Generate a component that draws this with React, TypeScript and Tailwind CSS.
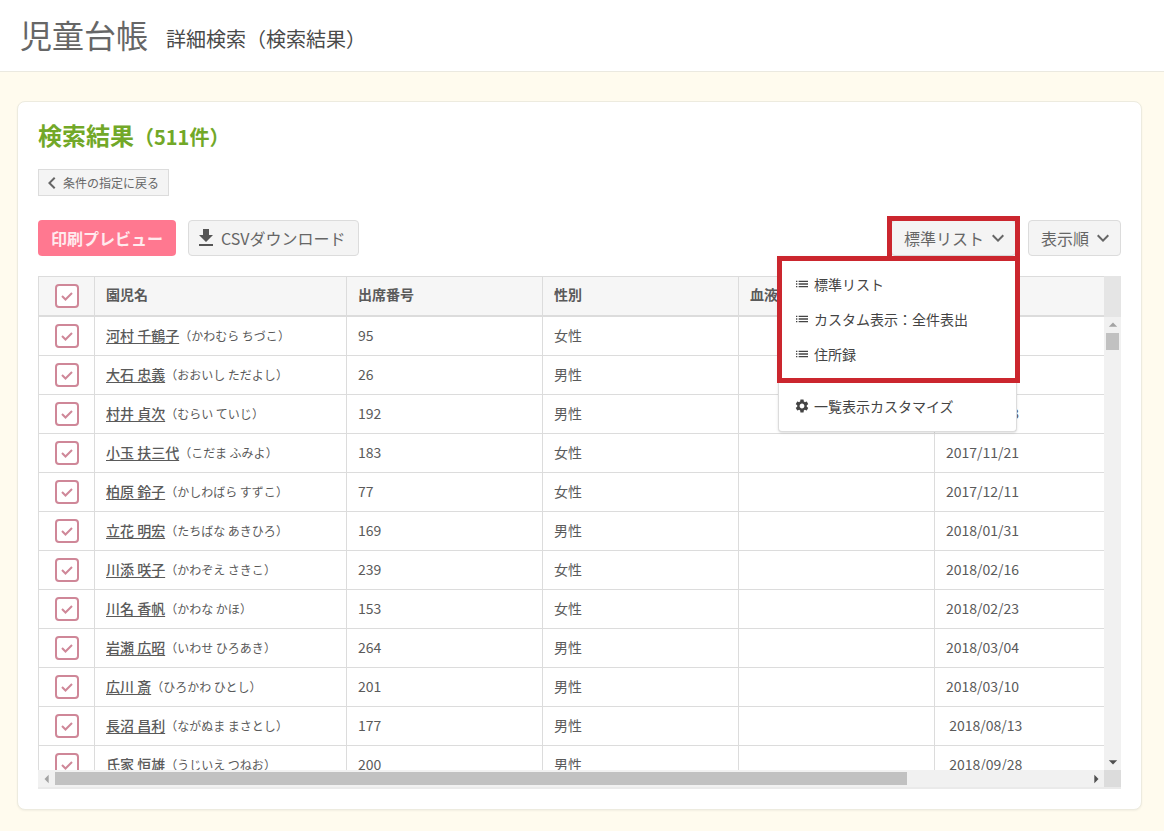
import { useState } from 'react';
import {
  MdArrowDropDown,
  MdArrowDropUp,
  MdArrowLeft,
  MdArrowRight,
  MdFileDownload,
  MdKeyboardArrowDown,
  MdKeyboardArrowLeft,
  MdList,
  MdSettings,
} from 'react-icons/md';

type Child = {
  name: string;
  kana: string;
  number: number;
  gender: string;
  bloodType?: string;
  date: string;
};

const CHILDREN: Child[] = [
  { name: '河村 千鶴子', kana: 'かわむら ちづこ', number: 95, gender: '女性', date: '2017/10/05' },
  { name: '大石 忠義', kana: 'おおいし ただよし', number: 26, gender: '男性', date: '2017/10/18' },
  { name: '村井 貞次', kana: 'むらい ていじ', number: 192, gender: '男性', date: '2017/11/13' },
  { name: '小玉 扶三代', kana: 'こだま ふみよ', number: 183, gender: '女性', date: '2017/11/21' },
  { name: '柏原 鈴子', kana: 'かしわばら すずこ', number: 77, gender: '女性', date: '2017/12/11' },
  { name: '立花 明宏', kana: 'たちばな あきひろ', number: 169, gender: '男性', date: '2018/01/31' },
  { name: '川添 咲子', kana: 'かわぞえ さきこ', number: 239, gender: '女性', date: '2018/02/16' },
  { name: '川名 香帆', kana: 'かわな かほ', number: 153, gender: '女性', date: '2018/02/23' },
  { name: '岩瀬 広昭', kana: 'いわせ ひろあき', number: 264, gender: '男性', date: '2018/03/04' },
  { name: '広川 斎', kana: 'ひろかわ ひとし', number: 201, gender: '男性', date: '2018/03/10' },
  { name: '長沼 昌利', kana: 'ながぬま まさとし', number: 177, gender: '男性', date: ' 2018/08/13' },
  { name: '氏家 恒雄', kana: 'うじいえ つねお', number: 200, gender: '男性', date: ' 2018/09/28' },
];

const LISTS = ['標準リスト', 'カスタム表示：全件表出', '住所録'];

const BUTTON = 'flex h-9 items-center rounded border border-[#dcdcdc] bg-[#f4f4f4] text-base text-[#666]';
const TH = 'h-[41px] border-y border-b-2 border-r border-[#dcdcdc] bg-[#f6f6f6] px-[11px] pb-1 text-left font-bold';
const TD = 'h-[39px] border-b border-r border-[#dcdcdc] px-[11px] pb-0.5 whitespace-pre';

function CheckBox({ label }: { label: string }) {
  return (
    <label className="relative mx-auto block size-6">
      <input
        type="checkbox"
        defaultChecked
        aria-label={label}
        className="peer block size-6 appearance-none rounded border-2 border-[#cf8798] bg-white"
      />
      <svg
        viewBox="0 0 24 24"
        className="pointer-events-none absolute inset-0 hidden size-6 peer-checked:block"
        fill="none"
        stroke="#cf8798"
        strokeWidth="2"
      >
        <path d="M7 12l3.5 3.5L17 9" />
      </svg>
    </label>
  );
}

function ListMenu() {
  return (
    <div className="absolute -right-px top-full z-10 w-[239px] rounded-b border border-t-0 border-[#dcdcdc] bg-white text-sm text-[#444] shadow-sm">
      <ul className="relative pb-3 pt-2.5">
        {LISTS.map(item => (
          <li key={item}>
            <button type="button" className="flex h-[35px] w-full items-center gap-1 pl-[15px]">
              <MdList className="size-4" />
              {item}
            </button>
          </li>
        ))}
        <li aria-hidden="true" className="pointer-events-none absolute -left-0.5 -right-1 inset-y-0 border-5 border-[#cb262e]" />
      </ul>
      <div className="pb-2 pt-[5px]">
        <button type="button" className="flex h-[35px] w-full items-center gap-1 pl-[15px]">
          <MdSettings className="size-4" />
          一覧表示カスタマイズ
        </button>
      </div>
    </div>
  );
}

function Toolbar() {
  const [open, setOpen] = useState(true);

  return (
    <div className="mt-6 flex gap-3">
      <button type="button" className="h-9 rounded bg-[#ff7890] px-[13px] text-base font-bold text-white/85">
        印刷プレビュー
      </button>
      <button type="button" className={`${BUTTON} gap-[3px] pl-[5px] pr-3`}>
        <MdFileDownload className="size-6 text-[#555]" />
        CSVダウンロード
      </button>
      <div className="relative ml-auto">
        <button
          type="button"
          aria-haspopup="menu"
          aria-expanded={open}
          className={`${BUTTON} gap-0.5 pl-3 pr-[5px]`}
          onClick={() => setOpen(!open)}
        >
          標準リスト
          <MdKeyboardArrowDown className="size-6" />
        </button>
        <span className="pointer-events-none absolute -bottom-1.5 -left-1 -right-1 -top-1 border-5 border-[#cb262e]" />
        {open && <ListMenu />}
      </div>
      <button type="button" aria-haspopup="menu" className={`${BUTTON} gap-0.5 pl-3 pr-[5px]`}>
        表示順
        <MdKeyboardArrowDown className="size-6" />
      </button>
    </div>
  );
}

function ResultTable() {
  return (
    <div className="mt-5 grid grid-cols-[minmax(0,1fr)_17px] grid-rows-[494px_19px]">
      <div className="overflow-hidden">
        <table className="w-full table-fixed border-separate border-spacing-0 border-l border-[#dcdcdc] text-sm">
          <colgroup>
            <col className="w-14" />
            <col className="w-[252px]" />
            <col className="w-[196px]" />
            <col className="w-[196px]" />
            <col className="w-[196px]" />
            <col />
          </colgroup>
          <thead>
            <tr>
              <th className="h-[41px] border-y border-b-2 border-r border-[#dcdcdc] bg-[#f6f6f6]">
                <CheckBox label="すべて選択" />
              </th>
              <th className={TH}>園児名</th>
              <th className={TH}>出席番号</th>
              <th className={TH}>性別</th>
              <th className={TH}>血液型</th>
              <th className="border-y border-b-2 border-[#dcdcdc] bg-[#f6f6f6]" />
            </tr>
          </thead>
          <tbody>
            {CHILDREN.map(child => (
              <tr key={child.number}>
                <td className="h-[39px] border-b border-r border-[#dcdcdc]">
                  <CheckBox label={child.name} />
                </td>
                <td className={TD}>
                  <a href="#" className="font-medium underline underline-offset-2">
                    {child.name}
                  </a>
                  <span className="text-xs">（{child.kana}）</span>
                </td>
                <td className={TD}>{child.number}</td>
                <td className={TD}>{child.gender}</td>
                <td className={TD}>{child.bloodType}</td>
                <td className="h-[39px] whitespace-pre border-b border-[#dcdcdc] px-[11px] pb-0.5">{child.date}</td>
              </tr>
            ))}
          </tbody>
        </table>
      </div>
      <div className="flex flex-col items-center bg-[#f1f1f1]">
        <div className="h-[41px] w-full shrink-0 bg-[#e5e5e5]" />
        <MdArrowDropUp className="-my-0.5 size-5 shrink-0 text-[#a3a3a3]" />
        <div className="h-[17px] w-[13px] bg-[#c1c1c1]" />
        <MdArrowDropDown className="-mb-0.5 mt-auto size-5 shrink-0 text-[#505050]" />
      </div>
      <div className="flex items-center border-b-2 border-[#eaeaea] bg-[#f1f1f1] pl-px">
        <MdArrowLeft className="-mx-0.5 size-5 shrink-0 text-[#a3a3a3]" />
        <div className="flex-1">
          <div className="h-[13px] w-[82.5%] bg-[#c1c1c1]" />
        </div>
        <MdArrowRight className="-mx-0.5 size-5 shrink-0 text-[#505050]" />
      </div>
      <div className="border-b-2 border-[#eaeaea] bg-[#dcdcdc]" />
    </div>
  );
}

export default function App() {
  return (
    <div className="min-h-screen bg-[#fffbee] pb-[21px] font-['Noto_Sans_CJK_JP',sans-serif] text-[#5a5a5a]">
      <header className="flex h-[72px] items-center gap-[18px] border-b border-[#ebe9e0] bg-white px-5">
        <h1 className="pb-1 text-[32px] leading-10 text-[#666]">児童台帳</h1>
        <p className="pt-1.5 text-xl text-[#4a4a4a]">詳細検索（検索結果）</p>
      </header>
      <main className="ml-[17px] mr-[22px] mt-[29px] rounded-lg border border-[#edebdf] bg-white px-5 pb-5 pt-[17px] shadow-xs">
        <h2 className="text-2xl font-bold leading-8 text-[#72a828]">
          検索結果<span className="text-xl">（511件）</span>
        </h2>
        <button
          type="button"
          className="mt-[18px] flex h-[27px] items-center border border-[#dcdcdc] bg-[#f4f4f4] pl-px pr-[9px] text-xs text-[#666]"
        >
          <MdKeyboardArrowLeft className="-mr-px size-6" />
          条件の指定に戻る
        </button>
        <Toolbar />
        <ResultTable />
      </main>
    </div>
  );
}
